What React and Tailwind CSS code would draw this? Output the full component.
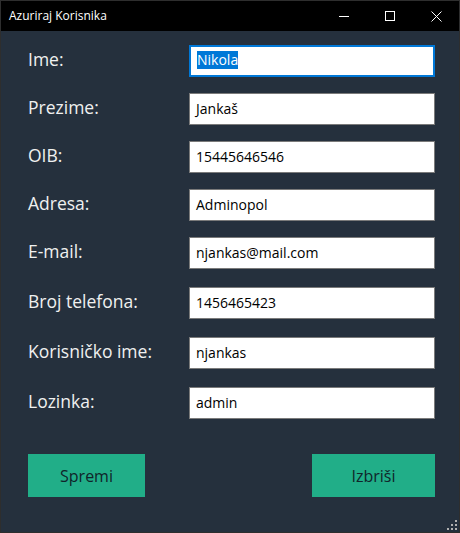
// Prozor za ažuriranje korisnika
const polja = [
  { label: "Ime:", value: "Nikola", focus: true },
  { label: "Prezime:", value: "Jankaš" },
  { label: "OIB:", value: "15445646546" },
  { label: "Adresa:", value: "Adminopol" },
  { label: "E-mail:", value: "njankas@mail.com" },
  { label: "Broj telefona:", value: "1456465423" },
  { label: "Korisničko ime:", value: "njankas" },
  { label: "Lozinka:", value: "admin" },
];

export default function App() {
  return (
    <div
      className="w-[460px] h-[533px] flex flex-col bg-[#25303d] border border-[#2e2e2e]"
      style={{ fontFamily: '"Open Sans", "Noto Sans", sans-serif' }}
    >
      {/* naslovna traka */}
      <div className="h-[30px] bg-black flex items-center text-white shrink-0">
        <span className="pl-2 text-[12px] flex-1">Azuriraj Korisnika</span>
        <div className="w-[46px] h-full flex items-center justify-center">
          <div className="w-[10px] h-px bg-white" />
        </div>
        <div className="w-[46px] h-full flex items-center justify-center">
          <div className="w-[10px] h-[10px] border border-white" />
        </div>
        <div className="w-[46px] h-full flex items-center justify-center">
          <svg width="11" height="11" viewBox="0 0 11 11">
            <path d="M0.5 0.5L10.5 10.5M10.5 0.5L0.5 10.5" stroke="white" strokeWidth="1" />
          </svg>
        </div>
      </div>

      {/* forma */}
      <div className="flex flex-col pl-[27px] pr-6 pt-[14px]">
        {polja.map((p, i) => (
          <div key={p.label} className={"flex items-center " + (i === 0 ? "" : i < 5 ? "mt-[16px]" : "mt-[18px]")}>
            <span className="w-[161px] text-[17.5px] text-[#f0f0f0] pb-[4px]">{p.label}</span>
            <div
              className={
                "w-[246px] h-[32px] bg-white flex items-center px-[6px] pb-[2px] text-[14px] text-black " +
                (p.focus ? "border-2 border-[#0078d7] px-[5px]" : "border border-[#7a7a7a]")
              }
            >
              {p.focus ? <span className="bg-[#0078d7] text-white leading-[18px]">{p.value}</span> : p.value}
            </div>
          </div>
        ))}

        <div className="flex justify-between mt-[35px]">
          <button className="w-[117px] h-[43px] bg-[#21ae88] text-[16px] text-[#10252a]">Spremi</button>
          <button className="w-[123px] h-[43px] bg-[#21ae88] text-[16px] text-[#10252a]">Izbriši</button>
        </div>
      </div>

      {/* hvataljka za promjenu veličine */}
      <div className="flex-1 flex items-end justify-end pr-[2px] pb-[2px]">
        <svg width="10" height="10" viewBox="0 0 10 10" fill="#b0b0b0">
          <rect x="8" y="0" width="2" height="2" />
          <rect x="4" y="4" width="2" height="2" />
          <rect x="8" y="4" width="2" height="2" />
          <rect x="0" y="8" width="2" height="2" />
          <rect x="4" y="8" width="2" height="2" />
          <rect x="8" y="8" width="2" height="2" />
        </svg>
      </div>
    </div>
  );
}
